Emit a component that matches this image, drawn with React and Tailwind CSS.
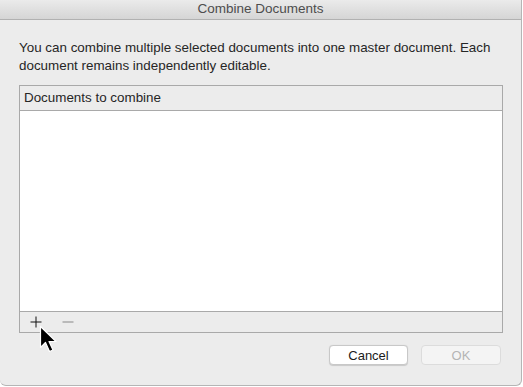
export default function App() {
  return (
    <div className="w-[523px] h-[387px] bg-white" style={{ fontFamily: '"Liberation Sans", Arial, sans-serif' }}>
      <div className="w-[522px] h-[386px] bg-[#ececec] border-r border-b border-[#b5b5b5] rounded-b-[6px] flex flex-col overflow-hidden">
        <div className="h-[20px] shrink-0 bg-gradient-to-b from-[#ebebeb] to-[#d5d5d5] border-b border-[#b1b1b1] flex items-center justify-center text-[13.5px] text-[#4d4d4d]">
          Combine Documents
        </div>
        <p className="mt-[19px] px-[19px] text-[13.4px] leading-[18px] text-[#262626]">
          You can combine multiple selected documents into one master document. Each document remains independently editable.
        </p>
        <div className="mt-[10px] ml-[19px] w-[484px] h-[248px] border border-[#a9a9a9] flex flex-col">
          <div className="h-[25px] shrink-0 border-b border-[#a9a9a9] flex items-center px-[4px] pt-[1px] text-[13.4px] text-[#262626]">
            Documents to combine
          </div>
          <div className="flex-1 bg-white border-b border-[#a9a9a9]" />
          <div className="h-[20px] shrink-0 flex items-center relative">
            <svg width="12" height="12" viewBox="0 0 12 12" className="ml-[10px]">
              <path d="M6 0.5V11.5M0.5 6H11.5" stroke="#111" strokeWidth="1" />
            </svg>
            <svg width="12" height="12" viewBox="0 0 12 12" className="ml-[20px]">
              <path d="M0.5 6H11.5" stroke="#888" strokeWidth="1" />
            </svg>
            <svg width="18" height="28" viewBox="0 0 18 28" className="absolute left-[19px] top-[13px]">
              <path d="M1.5 1.5V22.5L6.5 17.5L10.5 26.5L14 25L10 16.5H17Z" fill="#000" stroke="#fff" strokeWidth="1.2" strokeLinejoin="round" />
            </svg>
          </div>
        </div>
        <div className="mt-[12px] flex justify-end gap-[13px] pr-[20px]">
          <button className="w-[79px] h-[20px] bg-white border border-[#c8c8c8] rounded-[4px] text-[13px] text-[#1a1a1a] shadow-[0_0.5px_1px_rgba(0,0,0,0.15)]">
            Cancel
          </button>
          <button className="w-[80px] h-[20px] bg-[#f4f4f4] border border-[#dcdcdc] rounded-[4px] text-[13px] text-[#b5b5b5]">
            OK
          </button>
        </div>
      </div>
    </div>
  );
}
